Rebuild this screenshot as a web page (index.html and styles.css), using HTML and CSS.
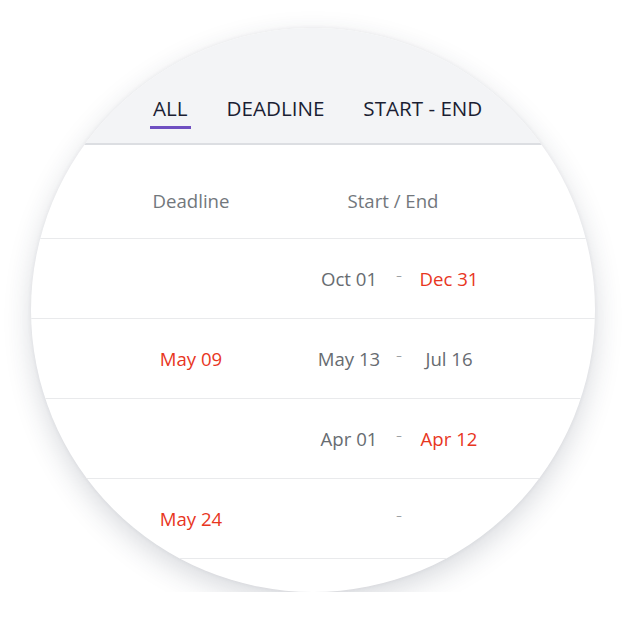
FILE: index.html
```html
<!DOCTYPE html>
<html lang="en">
<head>
<meta charset="UTF-8" />
<meta name="viewport" content="width=device-width, initial-scale=1" />
<title>Dates</title>
<link rel="stylesheet" href="styles.css">
</head>
<body>

<!-- Lente circular com a tabela -->
<div class="lens">
  <nav class="tabs">
    <span class="tab active">ALL</span>
    <span class="tab">DEADLINE</span>
    <span class="tab">START - END</span>
  </nav>

  <div class="table">
    <div class="row head">
      <span class="deadline">Deadline</span>
      <span class="span-range">Start / End</span>
    </div>
    <div class="row">
      <span class="deadline"></span>
      <span class="date">Oct 01</span>
      <span class="sep">–</span>
      <span class="date late">Dec 31</span>
    </div>
    <div class="row">
      <span class="deadline late">May 09</span>
      <span class="date">May 13</span>
      <span class="sep">–</span>
      <span class="date">Jul 16</span>
    </div>
    <div class="row">
      <span class="deadline"></span>
      <span class="date">Apr 01</span>
      <span class="sep">–</span>
      <span class="date late">Apr 12</span>
    </div>
    <div class="row">
      <span class="deadline late">May 24</span>
      <span class="date"></span>
      <span class="sep">–</span>
      <span class="date"></span>
    </div>
    <div class="row">
      <span class="deadline"></span>
      <span class="date">Apr 15</span>
      <span class="sep">–</span>
      <span class="date">Apr 30</span>
    </div>
  </div>
</div>

</body>
</html>
```

FILE: styles.css
```css
/* Reset */
* {
  margin: 0; padding: 0; box-sizing: border-box;
}
body, html {
  background: #fff;
  font-family: 'Open Sans', 'Noto Sans', sans-serif;
}
body {
  padding: 28px 0 0 31px;
}

/* Circulo */
.lens {
  width: 564px;
  height: 564px;
  border-radius: 50%;
  overflow: hidden;
  background: #fff;
  box-shadow: 0 10px 28px rgba(40, 48, 70, 0.18), 0 0 4px rgba(40, 48, 70, 0.07);
}

/* Abas */
.tabs {
  display: flex;
  gap: 33px;
  height: 117px;
  padding: 67px 0 0 119px;
  background: #f3f4f6;
  border-bottom: 2px solid #dcdee2;
}
.tab {
  padding: 0 3px;
  height: 34px;
  font-size: 20.6px;
  line-height: 27px;
  color: #1b1e33;
}
.tab.active {
  border-bottom: 3px solid #6f4fc1;
}

/* Tabela */
.row {
  display: grid;
  grid-template-columns: 198px 80px 20px 80px;
  align-items: center;
  height: 80px;
  padding-left: 80px;
  border-bottom: 1px solid #e9eaec;
  font-size: 18.6px;
  color: #676c71;
}
.row.head {
  height: 94px;
  padding-top: 18px;
  color: #72777c;
}
.deadline {
  padding-right: 38px;
  text-align: center;
}
.span-range {
  grid-column: 2 / 5;
  padding-right: 12px;
  text-align: center;
}
.date {
  text-align: center;
  white-space: nowrap;
}
.sep {
  margin-bottom: 8px;
  font-size: 11px;
  text-align: center;
  color: #8f9398;
}
.late {
  color: #e8361e;
}
```
